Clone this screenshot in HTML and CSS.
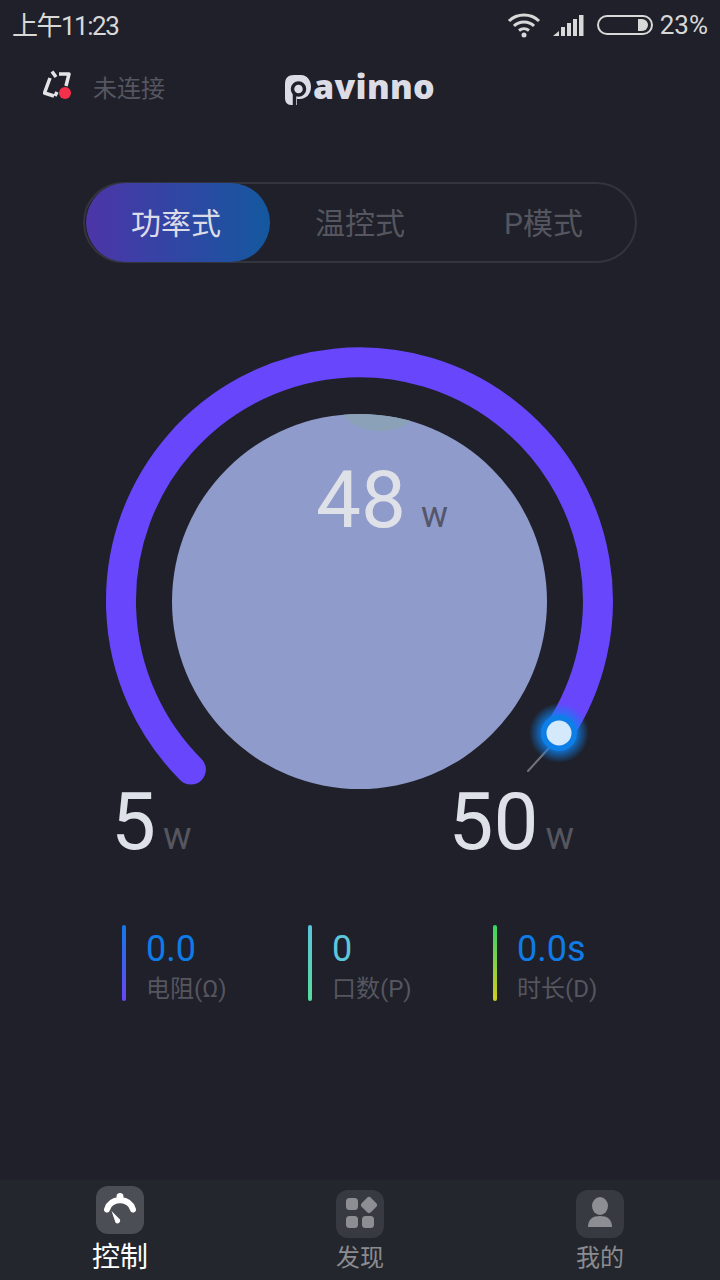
FILE: index.html
```html
<!DOCTYPE html>
<html lang="zh">
<head>
    <meta charset="UTF-8">
    <meta name="viewport" content="width=device-width, initial-scale=1.0">
    <title>Pavinno</title>
    <link rel="stylesheet" href="styles.css">
</head>
<body>
    <div class="status-bar">
        <span class="status-time">上午11:23</span>
        <div class="status-right">
            <svg class="wifi" width="34" height="26" viewBox="0 0 34 26" fill="none" stroke="#d8d8d8" stroke-width="3">
                <path d="M2 9 C10 1 24 1 32 9"/>
                <path d="M7 14 C12 8.500 22 8.500 27 14"/>
                <path d="M12 18.500 C15 16 19 16 22 18.500"/>
                <circle cx="17" cy="23" r="2.500" fill="#d8d8d8" stroke="none"/>
            </svg>
            <svg class="signal" width="32" height="22" viewBox="0 0 32 22" fill="#d8d8d8">
                <path d="M0 22 L6 17 V22 Z"/>
                <rect x="8" y="13" width="4" height="9"/>
                <rect x="14" y="9" width="4" height="13"/>
                <rect x="20" y="5" width="4" height="17"/>
                <rect x="26" y="1" width="4.500" height="21"/>
            </svg>
            <svg class="battery" width="56" height="20" viewBox="0 0 56 20" fill="none">
                <rect x="1" y="1" width="54" height="18" rx="9" stroke="#d8d8d8" stroke-width="2"/>
                <path d="M41 4 H45 A6 6 0 0 1 45 16 H41 Z" fill="#d8d8d8"/>
            </svg>
            <span class="status-battery">23%</span>
        </div>
    </div>

    <header class="top-bar">
        <div class="conn">
            <svg class="conn-icon" width="30" height="32" viewBox="0 0 30 32" fill="none">
                <path d="M7 8 L1.500 23 L11 26 M9 1.500 L13 7 M16 4 H26 L23 16 M14 22 L12 26" stroke="#e4e4e8" stroke-width="3.500" stroke-linejoin="round"/>
                <circle cx="22" cy="23" r="6" fill="#f5304a"/>
            </svg>
            <span class="conn-text">未连接</span>
        </div>
        <div class="logo">
            <svg class="logo-mark" width="26" height="30" viewBox="0 0 26 30">
                <path fill="#dcdce6" d="M9 0 H16 C22 0 26 5 26 12 C26 19 21 24 15 24 H12 V30 H6 C2 30 0 27 0 23 V9 C0 3 3 0 9 0 Z"/>
                <circle cx="13.500" cy="14" r="6" fill="none" stroke="#1f2029" stroke-width="3.500"/>
                <path d="M9.500 18 V30" stroke="#1f2029" stroke-width="3.500"/>
            </svg>
            <span class="logo-text">avinno</span>
        </div>
        <div></div>
    </header>

    <main class="content">
        <div class="mode-tabs">
            <div class="mode-tab active">功率式</div>
            <div class="mode-tab">温控式</div>
            <div class="mode-tab third">P模式</div>
        </div>

        <div class="gauge">
            <svg class="gauge-svg" width="720" height="450" viewBox="0 340 720 450" fill="none">
                <defs>
                    <clipPath id="dial"><circle cx="359.500" cy="601.500" r="187.500"/></clipPath>
                    <radialGradient id="glow">
                        <stop offset="0.55" stop-color="#0f80f0" stop-opacity="0.85"/>
                        <stop offset="1" stop-color="#0f80f0" stop-opacity="0"/>
                    </radialGradient>
                </defs>
                <path d="M190.900 769.600 A238.500 238.500 0 1 1 558.500 732.300" stroke="#6846fb" stroke-width="30" stroke-linecap="round"/>
                <circle cx="359.500" cy="601.500" r="187.500" fill="#8f9bcb"/>
                <ellipse cx="380" cy="400" rx="42" ry="31" fill="#8aa1b8" clip-path="url(#dial)"/>
                <path d="M549 748 L528 771" stroke="#71737a" stroke-width="2" stroke-linecap="round"/>
                <circle cx="559" cy="733" r="30" fill="url(#glow)"/>
                <circle cx="559" cy="733" r="18" fill="#0f7fe8"/>
                <circle cx="559" cy="733" r="12.500" fill="#d5e9fd"/>
            </svg>
            <div class="gauge-value">48<span class="gauge-unit">w</span></div>
        </div>

        <div class="limits">
            <div class="limit">5<span class="limit-unit">w</span></div>
            <div class="limit">50<span class="limit-unit">w</span></div>
        </div>

        <div class="stats">
            <div class="stat">
                <div class="stat-bar bar-blue"></div>
                <div>
                    <div class="stat-value">0.0</div>
                    <div class="stat-label">电阻(Ω)</div>
                </div>
            </div>
            <div class="stat">
                <div class="stat-bar bar-teal"></div>
                <div>
                    <div class="stat-value teal">0</div>
                    <div class="stat-label">口数(P)</div>
                </div>
            </div>
            <div class="stat">
                <div class="stat-bar bar-green"></div>
                <div>
                    <div class="stat-value">0.0s</div>
                    <div class="stat-label">时长(D)</div>
                </div>
            </div>
        </div>
    </main>

    <nav class="tab-bar">
        <div class="tab active">
            <div class="tab-icon">
                <svg width="48" height="48" viewBox="0 0 48 48" fill="#fff">
                    <path d="M11 23.500 C12.500 17.500 17.500 14.500 24 14 C30.500 14.500 35.500 17.500 37 23.500" fill="none" stroke="#fff" stroke-width="6" stroke-linecap="round"/>
                    <circle cx="24" cy="10.500" r="3.500"/>
                    <path d="M15.500 25 L24 33.500 C25 37 21 38.500 19.500 36.500 Z"/>
                </svg>
            </div>
            <span class="tab-label">控制</span>
        </div>
        <div class="tab">
            <div class="tab-icon">
                <svg width="48" height="48" viewBox="0 0 48 48" fill="#8d8e93">
                    <rect x="10" y="8" width="12" height="12" rx="3.500"/>
                    <rect x="26.500" y="8.500" width="13" height="13" rx="3" transform="rotate(45 33 15)"/>
                    <rect x="10" y="26" width="12" height="12" rx="3.500"/>
                    <rect x="26" y="26" width="12" height="12" rx="3.500"/>
                </svg>
            </div>
            <span class="tab-label">发现</span>
        </div>
        <div class="tab">
            <div class="tab-icon">
                <svg width="48" height="48" viewBox="0 0 48 48" fill="#8d8e93">
                    <ellipse cx="24" cy="16" rx="8" ry="9"/>
                    <path d="M12 37 C12 29 17 26 24 26 C31 26 36 29 36 37 Z"/>
                </svg>
            </div>
            <span class="tab-label">我的</span>
        </div>
    </nav>
</body>
</html>
```

FILE: styles.css
```css
:root {
    --bg-color: #1f2029;
    --muted-color: #55565f;
    --blue-color: #0f7be6;
}

* {
    margin: 0;
    padding: 0;
    box-sizing: border-box;
}

body {
    width: 720px;
    height: 1280px;
    overflow: hidden;
    display: flex;
    flex-direction: column;
    background-color: var(--bg-color);
    font-family: Roboto, "Noto Sans CJK SC", sans-serif;
}

.status-bar {
    height: 50px;
    padding: 0 12px;
    display: flex;
    justify-content: space-between;
    align-items: center;
    color: #d8d8d8;
    font-size: 26px;
}

.status-time {
    margin-top: -4px;
    letter-spacing: -1.5px;
}

.status-right {
    display: flex;
    align-items: center;
}

.wifi {
    margin-right: 12px;
}

.signal {
    margin-right: 12px;
}

.battery {
    margin-right: 7px;
}

.top-bar {
    height: 72px;
    display: grid;
    grid-template-columns: 1fr auto 1fr;
    align-items: center;
}

.conn {
    display: flex;
    align-items: center;
    padding-left: 43px;
}

.conn-icon {
    margin-right: 20px;
}

.conn-text {
    font-size: 24px;
    color: var(--muted-color);
}

.logo {
    display: flex;
    align-items: flex-end;
    gap: 2px;
    color: #dcdce6;
}

.logo-text {
    font-family: "Open Sans", sans-serif;
    font-weight: 800;
    font-size: 34px;
    line-height: 38px;
    letter-spacing: 0.3px;
}

.content {
    flex: 1;
    display: flex;
    flex-direction: column;
}

.mode-tabs {
    width: 554px;
    height: 81px;
    margin: 60px 0 0 83px;
    padding-left: 1px;
    display: grid;
    grid-template-columns: 184px 180px 185px;
    border: 2px solid #33343d;
    border-radius: 41px;
}

.mode-tab {
    margin: -1px 0;
    padding-bottom: 3px;
    display: flex;
    align-items: center;
    justify-content: center;
    font-size: 30px;
    color: var(--muted-color);
}

.mode-tab.active {
    padding-right: 4px;
    color: #dcdce8;
    border-radius: 40px;
    background: linear-gradient(90deg, #4d35a8, #14589f);
}

.mode-tab.third {
    padding-left: 2px;
}

.gauge {
    position: relative;
    height: 450px;
    margin-top: 77px;
}

.gauge-svg {
    display: block;
    overflow: visible;
}

.gauge-value {
    position: absolute;
    left: 316px;
    top: 113px;
    font-size: 80px;
    line-height: 94px;
    color: #dfe1e8;
}

.gauge-unit {
    margin-left: 15px;
    font-size: 36px;
    color: #55566a;
}

.limits {
    display: flex;
    justify-content: space-between;
    margin-top: -15px;
    padding: 0 146px 0 111px;
}

.limit {
    font-size: 80px;
    line-height: 94px;
    color: #dfe1e8;
}

.limit-unit {
    margin-left: 7px;
    font-size: 38px;
    color: var(--muted-color);
}

.stats {
    display: grid;
    grid-template-columns: 186px 185px auto;
    margin: 42px 0 0 122px;
}

.stat {
    display: flex;
    gap: 20px;
}

.stat-bar {
    width: 4px;
    height: 76px;
    border-radius: 2px;
}

.bar-blue {
    background: linear-gradient(180deg, #1478e6, #6846fb);
}

.bar-teal {
    background: linear-gradient(180deg, #5bc4dc, #55dc9c);
}

.bar-green {
    background: linear-gradient(180deg, #36d468, #d4cc20);
}

.stat-value {
    font-size: 36px;
    line-height: 48px;
    color: var(--blue-color);
}

.stat-value.teal {
    color: #5cc6dc;
}

.stat-label {
    font-size: 24px;
    line-height: 32px;
    color: var(--muted-color);
}

.tab-bar {
    height: 100px;
    display: grid;
    grid-template-columns: repeat(3, 240px);
    background-color: #23262d;
}

.tab {
    display: flex;
    flex-direction: column;
    align-items: center;
    padding-top: 10px;
    color: #8b8c90;
    font-size: 24px;
}

.tab-icon {
    width: 48px;
    height: 48px;
    background-color: #383a41;
    border-radius: 12px;
}

.tab-label {
    line-height: 36px;
    margin-top: 2px;
}

.tab.active {
    padding-top: 6px;
    color: #fff;
    font-size: 28px;
}

.tab.active .tab-label {
    margin-top: 6px;
}

.tab.active .tab-icon {
    background-color: #4c4e56;
}
```
